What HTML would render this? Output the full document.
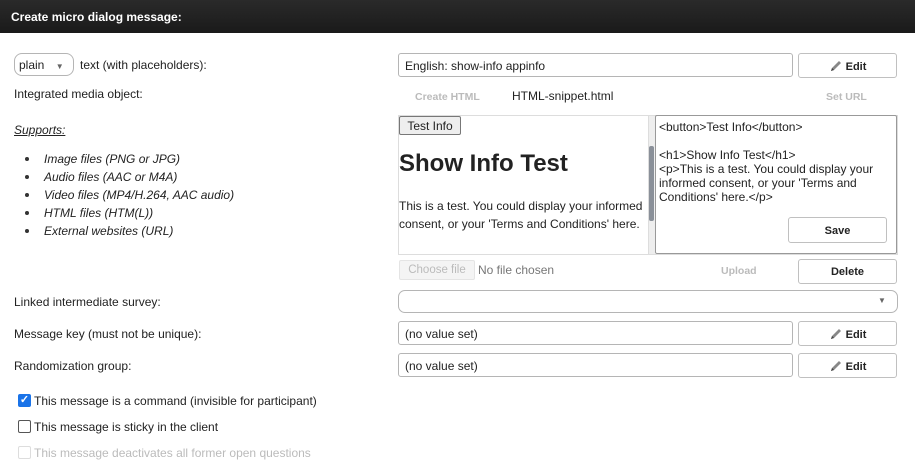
<!DOCTYPE html>
<html><head><style>
*{box-sizing:border-box}
body{margin:0;width:915px;height:467px;overflow:hidden;background:#fff;font-family:"Liberation Sans",Arial,sans-serif;font-size:12px;color:#222;position:relative}
.a{position:absolute;white-space:nowrap}
.hdr{left:0;top:0;width:915px;height:33px;background:linear-gradient(#2a2a2a,#1a1a1a);color:#fff;font-weight:bold;font-size:12px;padding:10px 0 0 11px}
.inp{border:1px solid #b5b5b5;border-radius:3px;background:#fff;padding:5px 6px;font-size:12px}
.btn{border:1px solid #c0c0c0;border-radius:3px;background:#fff;font-weight:bold;font-size:11px;text-align:center}
.gray{color:#bbb;font-weight:bold;font-size:10.5px}
.li{left:44px;font-style:italic;font-size:12px}
.dot{left:25px;width:4px;height:4px;border-radius:50%;background:#333}
.cb{left:18px;width:13px;height:13px;border:1px solid #555;border-radius:2px;background:#fff}
svg{vertical-align:-3px;margin-right:3px}
</style></head><body>
<div class="a hdr">Create micro dialog message:</div>

<div class="a inp" style="left:14px;top:53px;width:60px;height:23px;border-radius:8px;padding:4px 4px">plain <span style="font-size:8px;color:#666;margin-left:8px">▼</span></div>
<div class="a" style="left:80px;top:58px">text (with placeholders):</div>
<div class="a" style="left:14px;top:87px">Integrated media object:</div>
<div class="a" style="left:14px;top:123px;font-style:italic;text-decoration:underline">Supports:</div>

<div class="a dot" style="top:157px"></div><div class="a li" style="top:152px">Image files (PNG or JPG)</div>
<div class="a dot" style="top:175px"></div><div class="a li" style="top:170px">Audio files (AAC or M4A)</div>
<div class="a dot" style="top:193px"></div><div class="a li" style="top:188px">Video files (MP4/H.264, AAC audio)</div>
<div class="a dot" style="top:211px"></div><div class="a li" style="top:206px">HTML files (HTM(L))</div>
<div class="a dot" style="top:229px"></div><div class="a li" style="top:224px">External websites (URL)</div>

<div class="a inp" style="left:398px;top:53px;width:395px;height:24px">English: show-info appinfo</div>
<div class="a btn" style="left:798px;top:53px;width:99px;height:25px;padding-top:5px"><svg width="14" height="14" viewBox="0 0 14 14"><path d="M2 12 L3 9 L10 2 L12 4 L5 11 Z" fill="#888"/><path d="M2 12 L3 9 L5 11 Z" fill="#444"/></svg>Edit</div>

<div class="a gray" style="left:415px;top:91px">Create HTML</div>
<div class="a" style="left:512px;top:89px">HTML-snippet.html</div>
<div class="a gray" style="left:826px;top:91px">Set URL</div>

<div class="a" style="left:398px;top:115px;width:500px;height:140px;border:1px solid #ddd"></div>
<div class="a" style="left:399px;top:116px;width:62px;height:19px;border:1px solid #777;border-radius:2px;background:#eee;text-align:center;padding-top:2px">Test Info</div>
<div class="a" style="left:399px;top:150px;font-size:24px;font-weight:bold;color:#222">Show Info Test</div>
<div class="a" style="left:399px;top:197px;line-height:18px;font-size:12px">This is a test. You could display your informed<br>consent, or your 'Terms and Conditions' here.</div>
<div class="a" style="left:648px;top:116px;width:7px;height:138px;background:#eee;border-left:1px solid #ddd"></div>
<div class="a" style="left:649px;top:146px;width:5px;height:75px;background:#8a9099;border-radius:2px"></div>
<div class="a" style="left:655px;top:115px;width:242px;height:139px;border:1px solid #999;border-radius:2px"></div>
<div class="a" style="left:659px;top:120px;line-height:14px">&lt;button&gt;Test Info&lt;/button&gt;<br><br>&lt;h1&gt;Show Info Test&lt;/h1&gt;<br>&lt;p&gt;This is a test. You could display your<br>informed consent, or your 'Terms and<br>Conditions' here.&lt;/p&gt;</div>
<div class="a btn" style="left:788px;top:217px;width:99px;height:26px;padding-top:7px">Save</div>

<div class="a" style="left:399px;top:260px;width:76px;height:20px;border:1px solid #e4e4e4;border-radius:2px;background:#f4f4f4;color:#bbb;text-align:center;padding-top:3px;font-size:11.5px">Choose file</div>
<div class="a" style="left:478px;top:263px;color:#777">No file chosen</div>
<div class="a gray" style="left:721px;top:265px">Upload</div>
<div class="a btn" style="left:798px;top:259px;width:99px;height:25px;padding-top:6px">Delete</div>

<div class="a" style="left:14px;top:295px">Linked intermediate survey:</div>
<div class="a inp" style="left:398px;top:290px;width:500px;height:23px;border-radius:7px"></div>
<div class="a" style="left:878px;top:296px;font-size:8px;color:#666">▼</div>

<div class="a" style="left:14px;top:327px">Message key (must not be unique):</div>
<div class="a inp" style="left:398px;top:321px;width:395px;height:24px">(no value set)</div>
<div class="a btn" style="left:798px;top:321px;width:99px;height:25px;padding-top:5px"><svg width="14" height="14" viewBox="0 0 14 14"><path d="M2 12 L3 9 L10 2 L12 4 L5 11 Z" fill="#888"/><path d="M2 12 L3 9 L5 11 Z" fill="#444"/></svg>Edit</div>

<div class="a" style="left:14px;top:359px">Randomization group:</div>
<div class="a inp" style="left:398px;top:353px;width:395px;height:24px">(no value set)</div>
<div class="a btn" style="left:798px;top:353px;width:99px;height:25px;padding-top:5px"><svg width="14" height="14" viewBox="0 0 14 14"><path d="M2 12 L3 9 L10 2 L12 4 L5 11 Z" fill="#888"/><path d="M2 12 L3 9 L5 11 Z" fill="#444"/></svg>Edit</div>

<div class="a cb" style="top:394px;background:#1a73e8;border-color:#1a73e8;color:#fff;font-size:11px;line-height:11px;text-align:center;font-weight:bold">✓</div>
<div class="a" style="left:34px;top:394px">This message is a command (invisible for participant)</div>
<div class="a cb" style="top:420px"></div>
<div class="a" style="left:34px;top:420px">This message is sticky in the client</div>
<div class="a cb" style="top:446px;border-color:#ddd"></div>
<div class="a" style="left:34px;top:446px;color:#bbb">This message deactivates all former open questions</div>
</body></html>
